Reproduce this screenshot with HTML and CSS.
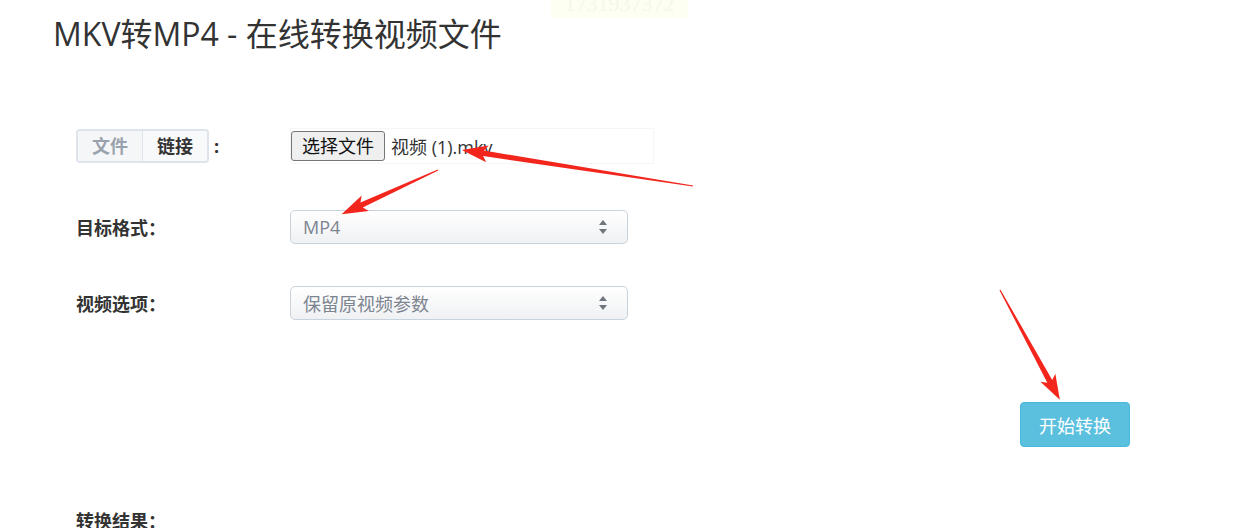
FILE: index.html
```html
<!DOCTYPE html>
<html lang="zh-CN">
  <head>
    <meta charset="UTF-8" />
    <meta name="viewport" content="width=device-width, initial-scale=1.0" />
    <link rel="stylesheet" href="styles.css">
    <title>MKV转MP4 - 在线转换视频文件</title>
  </head>
  <body>
    <div class="watermark">1731937372</div>
    <h1 class="title">MKV转MP4 - 在线转换视频文件</h1>

    <div class="form">
      <div class="row row-file">
        <div class="label">
          <div class="toggle">
            <span class="tab tab-off">文件</span>
            <span class="tab tab-on">链接</span>
          </div>
          <span class="colon">:</span>
        </div>
        <div class="file-input">
          <span class="file-btn">选择文件</span>
          <span class="file-name">视频 (1).mkv</span>
        </div>
      </div>

      <div class="row">
        <div class="label">目标格式：</div>
        <div class="select">
          <span>MP4</span>
          <svg class="arrows" width="8" height="14" viewBox="0 0 8 14">
            <path d="M4 0 L8 5 L0 5 Z M4 14 L8 9 L0 9 Z" fill="#6f757c" />
          </svg>
        </div>
      </div>

      <div class="row">
        <div class="label">视频选项：</div>
        <div class="select">
          <span>保留原视频参数</span>
          <svg class="arrows" width="8" height="14" viewBox="0 0 8 14">
            <path d="M4 0 L8 5 L0 5 Z M4 14 L8 9 L0 9 Z" fill="#6f757c" />
          </svg>
        </div>
      </div>

      <div class="actions">
        <button class="start">开始转换</button>
      </div>

      <div class="label result">转换结果：</div>
    </div>

    <!-- red annotation arrows drawn over the page -->
    <svg class="marks" width="1242" height="528" viewBox="0 0 1242 528">
      <g fill="#f2261d">
        <polygon transform="translate(693 186) rotate(188.86)" points="0,-0.6 212,-2.8 208,-8.5 234,0 208,8.5 212,2.8 0,0.6" />
        <polygon transform="translate(438 170) rotate(155.4)" points="0,-0.6 84,-2.8 80,-8.5 106,0 80,8.5 84,2.8 0,0.6" />
        <polygon transform="translate(1000 290) rotate(61.4)" points="0,-0.6 104,-2.8 100,-8.5 125,0 100,8.5 104,2.8 0,0.6" />
      </g>
    </svg>
  </body>
</html>
```

FILE: styles.css
```css
body {
    margin: 0;
    font-family: "Open Sans", "Noto Sans CJK SC", sans-serif;
    color: #333;
    background: #fff;
    position: relative;
    width: 1242px;
    height: 528px;
    overflow: hidden;
}

.watermark {
    position: absolute;
    left: 551px;
    top: 0;
    width: 137px;
    height: 18px;
    overflow: hidden;
    background: #fdfff2;
    color: #f5f6ee;
    font-family: "Liberation Serif", serif;
    font-size: 22px;
    line-height: 8px;
    text-align: center;
}

.title {
    margin: 0;
    padding: 13px 0 0 53px;
    font-size: 32px;
    font-weight: 400;
    line-height: 42px;
    color: #333;
}

.form {
    padding: 73px 0 0 76px;
}

.row {
    display: grid;
    grid-template-columns: 214px 1fr;
    align-items: center;
    height: 34px;
    margin-bottom: 42px;
}

.row-file {
    margin-bottom: 48px;
}

.label {
    font-size: 18px;
    font-weight: 700;
    color: #333;
}

.row-file .label {
    display: flex;
    align-items: center;
}

.toggle {
    display: flex;
    border: 2px solid #dde4ec;
    border-radius: 4px;
    overflow: hidden;
}

.tab {
    height: 30px;
    line-height: 30px;
    padding: 0 14px;
    font-size: 18px;
    font-weight: 700;
}

.tab-off {
    background: #f4f6f8;
    color: #9aa2ad;
    border-right: 1px solid #dde4ec;
}

.tab-on {
    background: #f8f9fa;
    color: #333;
}

.colon {
    margin-left: 5px;
    font-weight: 700;
}

.file-input {
    display: flex;
    align-items: center;
    width: 362px;
    height: 34px;
    border: 1px solid #f6f6f6;
    font-size: 18px;
}

.file-btn {
    height: 28px;
    line-height: 28px;
    padding: 0 10px;
    background: #efefef;
    border: 1px solid #767676;
    border-radius: 3px;
    color: #111;
}

.file-name {
    margin-left: 6px;
    color: #333;
}

.select {
    display: flex;
    justify-content: space-between;
    align-items: center;
    width: 338px;
    height: 34px;
    box-sizing: border-box;
    padding: 0 20px 0 12px;
    border: 1px solid #c9d3dd;
    border-radius: 5px;
    background: linear-gradient(#ffffff, #eff1f3);
    color: #7d8590;
    font-size: 18px;
}

.arrows {
    display: block;
}

.actions {
    display: flex;
    justify-content: flex-end;
    width: 1054px;
    margin-top: 82px;
}

.start {
    width: 110px;
    height: 45px;
    border: 1px solid #46b8da;
    border-radius: 4px;
    background: #5bc0de;
    color: #fff;
    font-family: inherit;
    font-size: 18px;
}

.result {
    margin-top: 60px;
}

.marks {
    position: absolute;
    left: 0;
    top: 0;
    pointer-events: none;
}
```
